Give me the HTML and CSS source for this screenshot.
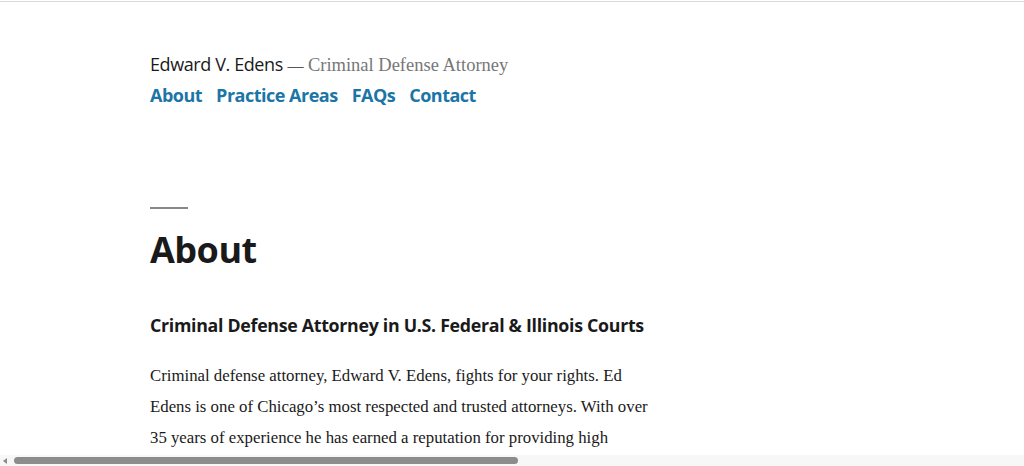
FILE: index.html
```html
<!DOCTYPE html>
<html lang="en">
<head>
<meta charset="utf-8">
<title>About – Edward V. Edens</title>
<link rel="stylesheet" href="styles.css">
</head>
<body>
<div class="topline"></div>
<div class="page">
  <header class="site-header">
    <p class="branding"><span class="site-title">Edward V. Edens</span> <span class="dash">—</span> <span class="tagline">Criminal Defense Attorney</span></p>
    <nav class="menu">
      <a href="#">About</a>
      <a href="#">Practice Areas</a>
      <a href="#">FAQs</a>
      <a href="#">Contact</a>
    </nav>
  </header>
  <main class="content">
    <hr class="sep">
    <h1 class="page-title">About</h1>
    <h2 class="sub">Criminal Defense Attorney in U.S. Federal &amp; Illinois Courts</h2>
    <p class="body-text">Criminal defense attorney, Edward V. Edens, fights for your rights. Ed Edens is one of Chicago’s most respected and trusted attorneys. With over 35 years of experience he has earned a reputation for providing high quality legal representation.</p>
  </main>
</div>
<div class="hscroll"><span class="arrow"></span><span class="thumb"></span></div>
</body>
</html>
```
FILE: styles.css
```css
html, body {
  margin: 0;
  padding: 0;
  background: #fff;
  overflow: hidden;
}
body {
  height: 466px;
}
.topline {
  height: 1px;
  margin-top: 1px;
  background: #d9d9d9;
}
.page {
  padding-left: 150px;
  width: 505px;
}
.site-header {
  padding-top: 48px;
}
.branding {
  margin: 0;
  font-size: 18px;
  line-height: 28px;
  color: #1a1a1a;
}
.site-title {
  font-family: "Open Sans", "Noto Sans", sans-serif;
  font-size: 18px;
  letter-spacing: -0.4px;
}
.dash {
  font-family: "Liberation Serif", serif;
  color: #555;
  font-size: 16px;
}
.tagline {
  font-family: "Liberation Serif", serif;
  color: #777;
  font-size: 18.5px;
}
.menu {
  display: flex;
  gap: 14px;
  margin-top: 1px;
}
.menu a {
  font-family: "Open Sans", "Noto Sans", sans-serif;
  font-weight: 700;
  font-size: 18px;
  line-height: 28px;
  color: #1b75a6;
  text-decoration: none;
  letter-spacing: -0.5px;
}
.content {
  padding-top: 98px;
}
.sep {
  width: 38px;
  height: 2px;
  border: 0;
  margin: 0;
  background: #888;
}
.page-title {
  margin: 18px 0 0;
  font-family: "Open Sans", "Noto Sans", sans-serif;
  font-weight: 700;
  font-size: 36px;
  line-height: 46px;
  color: #1a1a1a;
  letter-spacing: -0.5px;
}
.sub {
  margin: 39px 0 0;
  font-family: "Open Sans", "Noto Sans", sans-serif;
  font-weight: 700;
  font-size: 17.8px;
  line-height: 26px;
  color: #1a1a1a;
  letter-spacing: -0.3px;
  white-space: nowrap;
}
.body-text {
  margin: 22px 0 0;
  font-family: "Liberation Serif", serif;
  font-size: 16.8px;
  line-height: 31px;
  color: #1a1a1a;
}
.hscroll {
  position: fixed;
  left: 0;
  right: 0;
  bottom: 0;
  height: 11px;
  background: #f7f7f7;
  display: flex;
  align-items: center;
}
.arrow {
  width: 0;
  height: 0;
  margin-left: 3px;
  border-top: 3px solid transparent;
  border-bottom: 3px solid transparent;
  border-right: 4px solid #8a8a8a;
}
.thumb {
  margin-left: 7px;
  width: 504px;
  height: 7px;
  border-radius: 4px;
  background: #8c8c8c;
}
```
